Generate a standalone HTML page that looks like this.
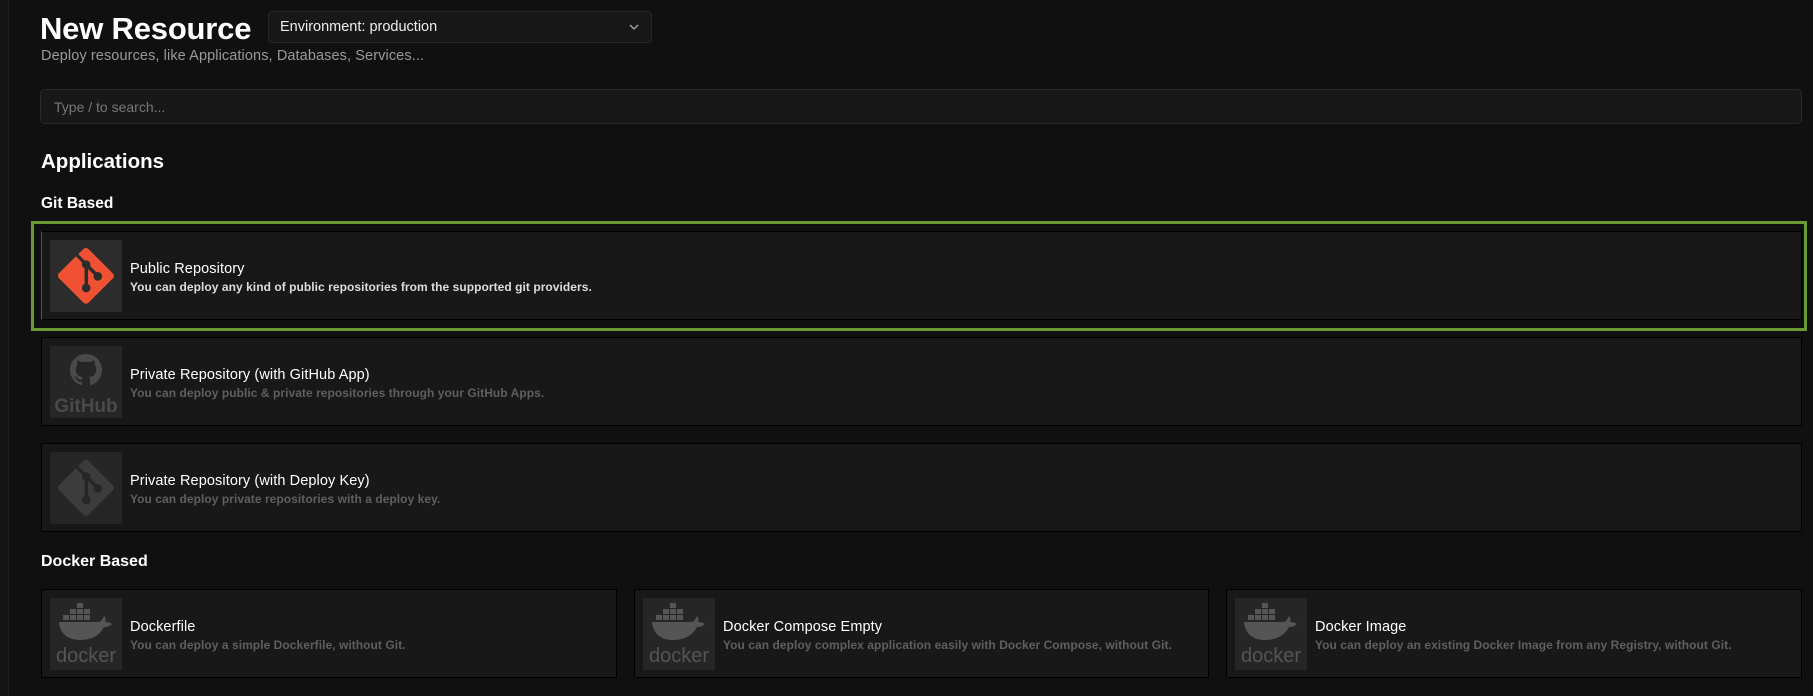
<!DOCTYPE html>
<html><head><meta charset="utf-8"><style>
*{box-sizing:border-box;margin:0;padding:0}
body{width:1813px;height:696px;background:#101010;font-family:"Liberation Sans",sans-serif;color:#fff;position:relative;overflow:hidden}
.side{position:absolute;left:0;top:0;width:9px;height:696px;background:#141414;border-right:1px solid #1c1c1c}
.abs{position:absolute}
h1{position:absolute;left:40px;top:11px;font-size:31px;font-weight:bold;letter-spacing:-0.2px}
.dd{left:268px;top:11px;width:384px;height:32px;border:1px solid #262626;border-radius:4px;background:#181818;font-size:14.5px;padding:7px 11px;color:#eee}
.sub{left:41px;top:48px;font-size:14.5px;color:#9a9a9a;letter-spacing:0.1px}
.search{left:40px;top:89px;width:1762px;height:35px;border:1px solid #2a2a2a;border-radius:5px;background:#181818;font-size:14px;color:#777;padding:9px 13px}
.h2{left:41px;top:150px;font-size:20.5px;font-weight:bold}
.h3{font-size:16px;font-weight:bold;left:41px}
.green{left:31px;top:221px;width:1776px;height:110px;border:3px solid #6a9a34}
.card{position:absolute;background:#181818;border:1px solid #000;height:89px}
.ic{position:absolute;left:8px;top:8px;width:72px;height:72px;background:#262626;display:flex;align-items:center;justify-content:center;overflow:hidden}
.t{position:absolute;left:88px;top:29px;font-size:14.5px;color:#fff;white-space:nowrap;letter-spacing:0.1px}
.d{position:absolute;left:88px;top:48px;font-size:12px;font-weight:bold;color:#5f5f5f;white-space:nowrap;letter-spacing:0.05px}
</style></head><body>
<div class="side"></div>
<h1>New Resource</h1>
<div class="abs dd">Environment: production<svg class="abs" style="right:12px;top:12px" width="10" height="7" viewBox="0 0 10 7"><path d="M1 1l4 4 4-4" stroke="#aaa" stroke-width="1.3" fill="none"/></svg></div>
<div class="abs sub">Deploy resources, like Applications, Databases, Services...</div>
<div class="abs search">Type / to search...</div>
<div class="abs h2">Applications</div>
<div class="abs h3" style="top:195px;font-size:15.5px">Git Based</div>
<div class="abs green"></div>

<div class="card" style="left:41px;top:231px;width:1761px;border-left:1px solid #6b2fd6">
 <div class="ic" style="background:#2c2c2c"><svg width="56" height="56" viewBox="0 0 92 92"><path fill="#f05133" d="M90.2 41.9L50.1 1.8c-2.3-2.3-6.1-2.3-8.4 0l-8.3 8.3 10.6 10.6c2.5-.8 5.3-.3 7.2 1.7 2 2 2.6 4.8 1.7 7.3l10.2 10.2c2.5-.9 5.3-.3 7.3 1.7 2.8 2.8 2.8 7.2 0 10-2.8 2.8-7.2 2.8-10 0-2.1-2.1-2.6-5.2-1.5-7.7l-9.5-9.5v25c.7.3 1.3.8 1.9 1.3 2.8 2.8 2.8 7.2 0 10-2.8 2.8-7.2 2.8-10 0-2.8-2.8-2.8-7.2 0-10 .7-.7 1.5-1.2 2.3-1.5V33.4c-.8-.3-1.6-.8-2.3-1.5-2.1-2.1-2.6-5.2-1.5-7.8L29.4 13.7 1.7 41.3c-2.3 2.3-2.3 6.1 0 8.4l40.1 40.1c2.3 2.3 6.1 2.3 8.4 0l39.9-39.9c2.4-2.3 2.4-6.1.1-8z"/></svg></div>
 <div class="t">Public Repository</div>
 <div class="d" style="color:#ddd">You can deploy any kind of public repositories from the supported git providers.</div>
</div>

<div class="card" style="left:41px;top:337px;width:1761px">
 <div class="ic"><svg width="64" height="66" viewBox="0 0 64 66"><g transform="translate(16,5) scale(2)"><path fill="#4a4a4a" d="M8 0C3.58 0 0 3.58 0 8c0 3.54 2.29 6.53 5.47 7.59.4.07.55-.17.55-.38 0-.19-.01-.82-.01-1.49-2.01.37-2.530-.49-2.69-.94-.09-.23-.48-.94-.82-1.130-.28-.15-.68-.52-.01-.53.63-.01 1.08.58 1.23.82.72 1.21 1.87.87 2.33.66.07-.52.28-.87.51-1.07-1.78-.2-3.64-.89-3.64-3.95 0-.87.31-1.59.82-2.15-.08-.2-.36-1.02.08-2.12 0 0 .67-.21 2.2.82.64-.18 1.32-.27 2-.27.68 0 1.36.09 2 .27 1.53-1.04 2.2-.82 2.2-.82.44 1.1.16 1.92.08 2.12.51.56.82 1.27.82 2.15 0 3.07-1.87 3.75-3.65 3.95.29.25.54.73.54 1.48 0 1.07-.01 1.93-.01 2.2 0 .21.15.46.55.38A8.013 8.013 0 0016 8c0-4.42-3.58-8-8-8z"/></g><text x="32" y="63" text-anchor="middle" font-family="Liberation Sans" font-weight="bold" font-size="19" fill="#4a4a4a">GitHub</text></svg></div>
 <div class="t">Private Repository (with GitHub App)</div>
 <div class="d">You can deploy public &amp; private repositories through your GitHub Apps.</div>
</div>

<div class="card" style="left:41px;top:443px;width:1761px">
 <div class="ic"><svg width="56" height="56" viewBox="0 0 92 92"><path fill="#3c3c3c" d="M90.2 41.9L50.1 1.8c-2.3-2.3-6.1-2.3-8.4 0l-8.3 8.3 10.6 10.6c2.5-.8 5.3-.3 7.2 1.7 2 2 2.6 4.8 1.7 7.3l10.2 10.2c2.5-.9 5.3-.3 7.3 1.7 2.8 2.8 2.8 7.2 0 10-2.8 2.8-7.2 2.8-10 0-2.1-2.1-2.6-5.2-1.5-7.7l-9.5-9.5v25c.7.3 1.3.8 1.9 1.3 2.8 2.8 2.8 7.2 0 10-2.8 2.8-7.2 2.8-10 0-2.8-2.8-2.8-7.2 0-10 .7-.7 1.5-1.2 2.3-1.5V33.4c-.8-.3-1.6-.8-2.3-1.5-2.1-2.1-2.6-5.2-1.5-7.8L29.4 13.7 1.7 41.3c-2.3 2.3-2.3 6.1 0 8.4l40.1 40.1c2.3 2.3 6.1 2.3 8.4 0l39.9-39.9c2.4-2.3 2.4-6.1.1-8z"/></svg></div>
 <div class="t">Private Repository (with Deploy Key)</div>
 <div class="d">You can deploy private repositories with a deploy key.</div>
</div>

<div class="abs h3" style="top:553px">Docker Based</div>

<div class="card" style="left:41px;top:589px;width:576px">
 <div class="ic"><svg width="66" height="66" viewBox="0 0 66 66"><g fill="#555"><rect x="24" y="2" width="6" height="5"/><rect x="24" y="8" width="6" height="5"/><rect x="17" y="8" width="6" height="5"/><rect x="31" y="8" width="6" height="5"/><rect x="10" y="14" width="6" height="5"/><rect x="17" y="14" width="6" height="5"/><rect x="24" y="14" width="6" height="5"/><rect x="31" y="14" width="6" height="5"/><path d="M6 21h40c3-1 4-4 5-6 2 2 2 4 1 6 3 0 6 1 7 2-3 3-6 3-8 3-4 8-12 13-24 13C15 39 7 33 6 21z"/></g><text x="33" y="61" text-anchor="middle" font-family="Liberation Sans" font-size="20" fill="#555">docker</text></svg></div>
 <div class="t">Dockerfile</div>
 <div class="d">You can deploy a simple Dockerfile, without Git.</div>
</div>
<div class="card" style="left:634px;top:589px;width:575px">
 <div class="ic"><svg width="66" height="66" viewBox="0 0 66 66"><g fill="#555"><rect x="24" y="2" width="6" height="5"/><rect x="24" y="8" width="6" height="5"/><rect x="17" y="8" width="6" height="5"/><rect x="31" y="8" width="6" height="5"/><rect x="10" y="14" width="6" height="5"/><rect x="17" y="14" width="6" height="5"/><rect x="24" y="14" width="6" height="5"/><rect x="31" y="14" width="6" height="5"/><path d="M6 21h40c3-1 4-4 5-6 2 2 2 4 1 6 3 0 6 1 7 2-3 3-6 3-8 3-4 8-12 13-24 13C15 39 7 33 6 21z"/></g><text x="33" y="61" text-anchor="middle" font-family="Liberation Sans" font-size="20" fill="#555">docker</text></svg></div>
 <div class="t">Docker Compose Empty</div>
 <div class="d">You can deploy complex application easily with Docker Compose, without Git.</div>
</div>
<div class="card" style="left:1226px;top:589px;width:576px">
 <div class="ic"><svg width="66" height="66" viewBox="0 0 66 66"><g fill="#555"><rect x="24" y="2" width="6" height="5"/><rect x="24" y="8" width="6" height="5"/><rect x="17" y="8" width="6" height="5"/><rect x="31" y="8" width="6" height="5"/><rect x="10" y="14" width="6" height="5"/><rect x="17" y="14" width="6" height="5"/><rect x="24" y="14" width="6" height="5"/><rect x="31" y="14" width="6" height="5"/><path d="M6 21h40c3-1 4-4 5-6 2 2 2 4 1 6 3 0 6 1 7 2-3 3-6 3-8 3-4 8-12 13-24 13C15 39 7 33 6 21z"/></g><text x="33" y="61" text-anchor="middle" font-family="Liberation Sans" font-size="20" fill="#555">docker</text></svg></div>
 <div class="t">Docker Image</div>
 <div class="d">You can deploy an existing Docker Image from any Registry, without Git.</div>
</div>
</body></html>
